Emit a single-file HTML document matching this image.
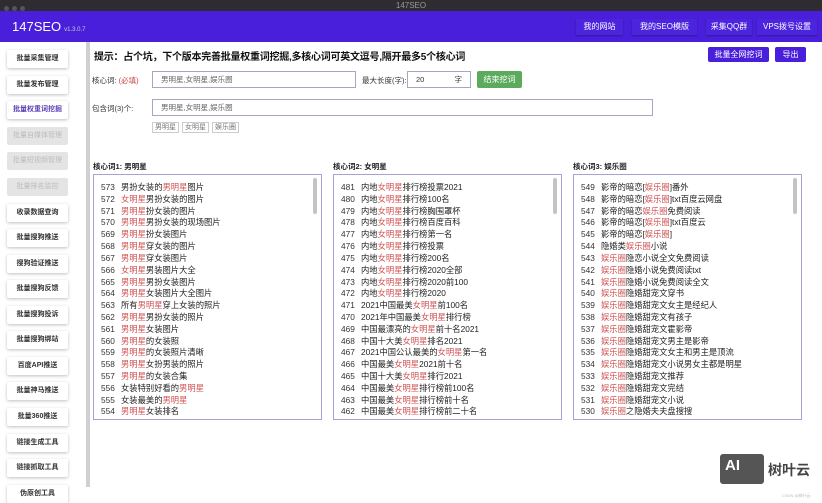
<!DOCTYPE html>
<html><head><meta charset="utf-8">
<style>
*{margin:0;padding:0;box-sizing:border-box}
body{width:822px;height:500px;overflow:hidden;background:#fff;font-family:"Liberation Sans","Noto Sans CJK SC",sans-serif;position:relative;color:#222}
.tb{position:absolute;left:0;top:0;width:822px;height:11px;background:#2e2c30;color:#999;font-size:8px;text-align:center;line-height:11px}
.dots{position:absolute;left:4px;top:3px}
.dots i{display:inline-block;width:5px;height:5px;border-radius:50%;background:#555;margin-right:3px}
.hd{position:absolute;left:0;top:11px;width:822px;height:31px;background:#4a1fdc}
.logo{position:absolute;left:12px;top:8px;color:#fff;font-size:13px}
.logo small{font-size:6px;color:#ccc;margin-left:3px}
.nb{position:absolute;top:8px;height:16px;line-height:16px;color:#fff;font-size:8px;text-align:center;background:#4d24de;box-shadow:0 1px 2px rgba(0,0,0,.3)}
.sb{position:absolute;left:0;top:42px;width:85px;height:458px;background:#fff}
.sbtn{position:absolute;left:7px;width:61px;height:18px;line-height:18px;font-size:7px;text-align:center;background:#fff;box-shadow:0 1px 3px rgba(0,0,0,.25);border-radius:2px;color:#333;font-weight:bold}
.dis{background:#e4e4e4;color:#bbb;box-shadow:none;font-weight:normal}
.act{color:#5a3fb8}
.sc{position:absolute;left:86px;top:42px;width:4px;height:445px;background:#d0d0d0}
.tip{position:absolute;left:94px;top:48px;font-size:10px;font-weight:bold;color:#111;letter-spacing:-0.25px;white-space:nowrap}
.pb{position:absolute;height:15px;line-height:15px;background:#4a1fdc;color:#fff;font-size:8px;text-align:center;border-radius:2px}
.lb{position:absolute;font-size:7.5px;color:#333}
.in{position:absolute;height:17px;border:1px solid #a9a6c4;font-size:7.5px;color:#666;padding-left:8px;line-height:15px;background:#fff}
.tag{position:absolute;top:122px;height:11px;border:1px solid #ccc;font-size:7px;color:#777;padding:0 2px;line-height:9px}
.ct{position:absolute;top:161px;font-size:7.5px;font-weight:bold}
.box{position:absolute;top:174px;width:229px;height:246px;border:1.5px solid #a9a0d4;padding:7px 0 0 7px;font-size:8.3px;line-height:11.82px;color:#222;overflow:hidden}
.box div{white-space:nowrap}
.box b{font-weight:normal;display:inline-block;width:20px;color:#333}
.r{color:#d05050}
.vs{position:absolute;right:4px;top:3px;width:4px;height:36px;background:#c4c4c4;border-radius:2px}
</style></head><body>
<div class="tb"><span class="dots"><i></i><i></i><i></i></span>147SEO</div>
<div class="hd">
<div class="logo">147SEO<small>v1.3.0.7</small></div>
<div class="nb" style="left:576px;width:47px">我的网站</div>
<div class="nb" style="left:632px;width:65px">我的SEO模版</div>
<div class="nb" style="left:706px;width:46px">采集QQ群</div>
<div class="nb" style="left:757px;width:60px">VPS拨号设置</div>
</div>
<div class="sb">
<div class="sbtn" style="top:8px">批量采集管理</div>
<div class="sbtn" style="top:34px">批量发布管理</div>
<div class="sbtn act" style="top:59px">批量权重词挖掘</div>
<div class="sbtn dis" style="top:85px">批量自媒体管理</div>
<div class="sbtn dis" style="top:110px">批量短视频管理</div>
<div class="sbtn dis" style="top:136px">批量排名监控</div>
<div class="sbtn" style="top:162px">收录数据查询</div>
<div class="sbtn" style="top:187px">批量搜狗推送</div>
<div class="sbtn" style="top:213px">搜狗验证推送</div>
<div class="sbtn" style="top:238px">批量搜狗反馈</div>
<div class="sbtn" style="top:264px">批量搜狗投诉</div>
<div class="sbtn" style="top:289px">批量搜狗绑站</div>
<div class="sbtn" style="top:315px">百度API推送</div>
<div class="sbtn" style="top:340px">批量神马推送</div>
<div class="sbtn" style="top:366px">批量360推送</div>
<div class="sbtn" style="top:392px">链接生成工具</div>
<div class="sbtn" style="top:417px">链接抓取工具</div>
<div class="sbtn" style="top:443px">伪原创工具</div>
</div>
<div class="sc"></div>
<div class="tip">提示：占个坑，下个版本完善批量权重词挖掘,多核心词可英文逗号,隔开最多5个核心词</div>
<div class="pb" style="left:708px;top:47px;width:61px">批量全网挖词</div>
<div class="pb" style="left:775px;top:47px;width:31px">导出</div>
<div class="lb" style="left:92px;top:75px">核心词: <span style="color:#c44">(必填)</span></div>
<div class="in" style="left:152px;top:71px;width:204px">男明星,女明星,娱乐圈</div>
<div class="lb" style="left:362px;top:75px">最大长度(字):</div>
<div class="in" style="left:407px;top:71px;width:64px;color:#333">20<span style="position:absolute;right:8px">字</span></div>
<div class="pb" style="left:477px;top:71px;width:45px;height:17px;line-height:17px;background:#5cab5c">结束挖词</div>
<div class="lb" style="left:92px;top:103px">包含词(3)个:</div>
<div class="in" style="left:152px;top:99px;width:501px">男明星,女明星,娱乐圈</div>
<div class="tag" style="left:152px">男明星</div>
<div class="tag" style="left:182px">女明星</div>
<div class="tag" style="left:212px">娱乐圈</div>
<div class="ct" style="left:93px">核心词1: 男明星</div>
<div class="ct" style="left:333px">核心词2: 女明星</div>
<div class="ct" style="left:573px">核心词3: 娱乐圈</div>
<div class="box" style="left:93px"><span class="vs"></span>
<div><b>573</b>男扮女装的<span class="r">男明星</span>图片</div>
<div><b>572</b><span class="r">女明星</span>男扮女装的图片</div>
<div><b>571</b><span class="r">男明星</span>扮女装的图片</div>
<div><b>570</b><span class="r">男明星</span>男扮女装的现场图片</div>
<div><b>569</b><span class="r">男明星</span>扮女装图片</div>
<div><b>568</b><span class="r">男明星</span>穿女装的图片</div>
<div><b>567</b><span class="r">男明星</span>穿女装图片</div>
<div><b>566</b><span class="r">女明星</span>男装图片大全</div>
<div><b>565</b><span class="r">男明星</span>男扮女装图片</div>
<div><b>564</b><span class="r">男明星</span>女装图片大全图片</div>
<div><b>563</b>所有<span class="r">男明星</span>穿上女装的照片</div>
<div><b>562</b><span class="r">男明星</span>男扮女装的照片</div>
<div><b>561</b><span class="r">男明星</span>女装图片</div>
<div><b>560</b><span class="r">男明星</span>的女装照</div>
<div><b>559</b><span class="r">男明星</span>的女装照片清晰</div>
<div><b>558</b><span class="r">男明星</span>女扮男装的照片</div>
<div><b>557</b><span class="r">男明星</span>的女装合集</div>
<div><b>556</b>女装特别好看的<span class="r">男明星</span></div>
<div><b>555</b>女装最美的<span class="r">男明星</span></div>
<div><b>554</b><span class="r">男明星</span>女装排名</div>
</div>
<div class="box" style="left:333px"><span class="vs"></span>
<div><b>481</b>内地<span class="r">女明星</span>排行榜投票2021</div>
<div><b>480</b>内地<span class="r">女明星</span>排行榜100名</div>
<div><b>479</b>内地<span class="r">女明星</span>排行榜胸围罩杯</div>
<div><b>478</b>内地<span class="r">女明星</span>排行榜百度百科</div>
<div><b>477</b>内地<span class="r">女明星</span>排行榜第一名</div>
<div><b>476</b>内地<span class="r">女明星</span>排行榜投票</div>
<div><b>475</b>内地<span class="r">女明星</span>排行榜200名</div>
<div><b>474</b>内地<span class="r">女明星</span>排行榜2020全部</div>
<div><b>473</b>内地<span class="r">女明星</span>排行榜2020前100</div>
<div><b>472</b>内地<span class="r">女明星</span>排行榜2020</div>
<div><b>471</b>2021中国最美<span class="r">女明星</span>前100名</div>
<div><b>470</b>2021年中国最美<span class="r">女明星</span>排行榜</div>
<div><b>469</b>中国最漂亮的<span class="r">女明星</span>前十名2021</div>
<div><b>468</b>中国十大美<span class="r">女明星</span>排名2021</div>
<div><b>467</b>2021中国公认最美的<span class="r">女明星</span>第一名</div>
<div><b>466</b>中国最美<span class="r">女明星</span>2021前十名</div>
<div><b>465</b>中国十大美<span class="r">女明星</span>排行2021</div>
<div><b>464</b>中国最美<span class="r">女明星</span>排行榜前100名</div>
<div><b>463</b>中国最美<span class="r">女明星</span>排行榜前十名</div>
<div><b>462</b>中国最美<span class="r">女明星</span>排行榜前二十名</div>
</div>
<div class="box" style="left:573px"><span class="vs"></span>
<div><b>549</b>影帝的暗恋[<span class="r">娱乐圈</span>]番外</div>
<div><b>548</b>影帝的暗恋[<span class="r">娱乐圈</span>]txt百度云网盘</div>
<div><b>547</b>影帝的暗恋<span class="r">娱乐圈</span>免费阅读</div>
<div><b>546</b>影帝的暗恋[<span class="r">娱乐圈</span>]txt百度云</div>
<div><b>545</b>影帝的暗恋[<span class="r">娱乐圈</span>]</div>
<div><b>544</b>隐婚类<span class="r">娱乐圈</span>小说</div>
<div><b>543</b><span class="r">娱乐圈</span>隐恋小说全文免费阅读</div>
<div><b>542</b><span class="r">娱乐圈</span>隐婚小说免费阅读txt</div>
<div><b>541</b><span class="r">娱乐圈</span>隐婚小说免费阅读全文</div>
<div><b>540</b><span class="r">娱乐圈</span>隐婚甜宠文穿书</div>
<div><b>539</b><span class="r">娱乐圈</span>隐婚甜宠文女主是经纪人</div>
<div><b>538</b><span class="r">娱乐圈</span>隐婚甜宠文有孩子</div>
<div><b>537</b><span class="r">娱乐圈</span>隐婚甜宠文霍影帝</div>
<div><b>536</b><span class="r">娱乐圈</span>隐婚甜宠文男主是影帝</div>
<div><b>535</b><span class="r">娱乐圈</span>隐婚甜宠文女主和男主是顶流</div>
<div><b>534</b><span class="r">娱乐圈</span>隐婚甜宠文小说男女主都是明星</div>
<div><b>533</b><span class="r">娱乐圈</span>隐婚甜宠文推荐</div>
<div><b>532</b><span class="r">娱乐圈</span>隐婚甜宠文完结</div>
<div><b>531</b><span class="r">娱乐圈</span>隐婚甜宠文小说</div>
<div><b>530</b><span class="r">娱乐圈</span>之隐婚夫夫盘搜搜</div>
</div>
<div style="position:absolute;left:720px;top:454px;width:44px;height:30px;background:#555;border-radius:3px;color:#fff;font-weight:bold;font-size:15px;padding:3px 0 0 5px">AI</div>
<div style="position:absolute;left:768px;top:460px;font-size:14px;font-weight:bold;color:#444">树叶云</div>
<div style="position:absolute;left:782px;top:493px;font-size:4px;color:#bbb">CSDN @树叶云</div>
</body></html>
